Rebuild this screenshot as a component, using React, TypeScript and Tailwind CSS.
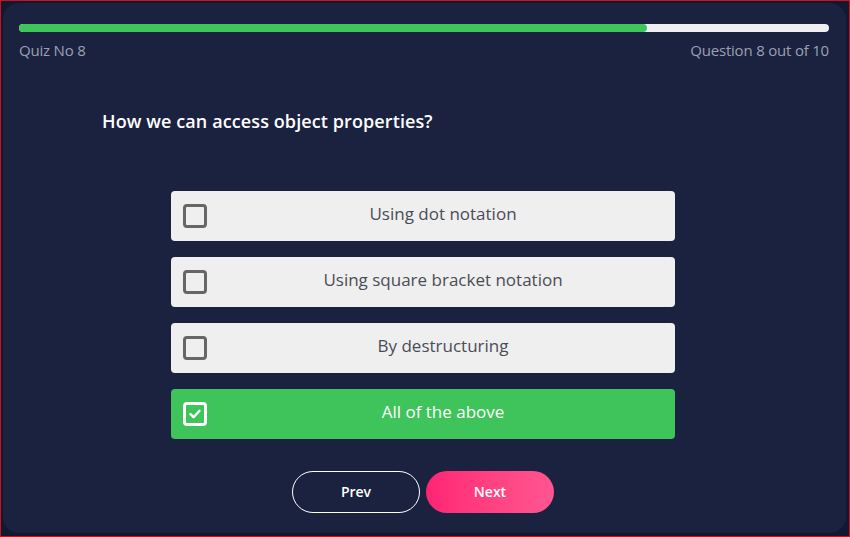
import React from 'react';

const OPCIONES = [
  'Using dot notation',
  'Using square bracket notation',
  'By destructuring',
  'All of the above',
];

function Opcion({ texto, marcada }: { texto: string; marcada: boolean }) {
  return (
    <div
      className={`flex items-center h-[50px] rounded-[4px] pl-3 ${
        marcada ? 'bg-[#3fc35b] text-white font-medium' : 'bg-[#efefef] text-[#4a4d57]'
      }`}
    >
      <div
        className={`w-6 h-6 rounded-[4px] border-[3px] flex items-center justify-center ${
          marcada ? 'border-white' : 'border-[#666666]'
        }`}
      >
        {marcada && (
          <svg width="14" height="14" viewBox="0 0 14 14" fill="none">
            <path d="M2.5 7.2 L5.6 10.2 L11.5 3.8" stroke="white" strokeWidth="2.4" strokeLinecap="round" strokeLinejoin="round" />
          </svg>
        )}
      </div>
      <div className="flex-1 ml-1 text-center text-[17px] pb-1">{texto}</div>
    </div>
  );
}

export default function App() {
  const progreso = 77.5;
  return (
    <div
      className="w-[850px] h-[537px] border border-[#d0101a] bg-[#111832] pt-[2px] pl-[2px] pr-[3px] pb-[3px]"
      style={{ fontFamily: '"Open Sans", "Noto Sans", sans-serif' }}
    >
      <div className="h-full rounded-[16px] bg-[#1b2240] pl-[16px] pr-[17px] pt-[21px]">
        <div className="h-2 w-full rounded-full bg-[#eeeef3] overflow-hidden">
          <div className="h-full rounded-full bg-[#3ec55c]" style={{ width: `${progreso}%` }} />
        </div>
        <div className="flex justify-between mt-[7px] text-[15px] text-[#9aa0b2] tracking-[-0.2px]">
          <span>Quiz No 8</span>
          <span>Question 8 out of 10</span>
        </div>
        <h2 className="mt-[46px] ml-[83px] text-[18px] font-semibold text-white tracking-[0.1px]">
          How we can access object properties?
        </h2>
        <div className="ml-[152px] mt-[56px] w-[504px] flex flex-col gap-4">
          {OPCIONES.map((o, i) => (
            <Opcion key={o} texto={o} marcada={i === 3} />
          ))}
        </div>
        <div className="flex justify-center gap-[6px] mt-[32px] pr-[2px]">
          <button className="w-[128px] h-[42px] rounded-full border border-white text-white text-[14px] font-semibold">
            Prev
          </button>
          <button className="w-[128px] h-[42px] rounded-full bg-gradient-to-r from-[#ff2473] to-[#ff5590] text-white text-[14px] font-semibold">
            Next
          </button>
        </div>
      </div>
    </div>
  );
}
